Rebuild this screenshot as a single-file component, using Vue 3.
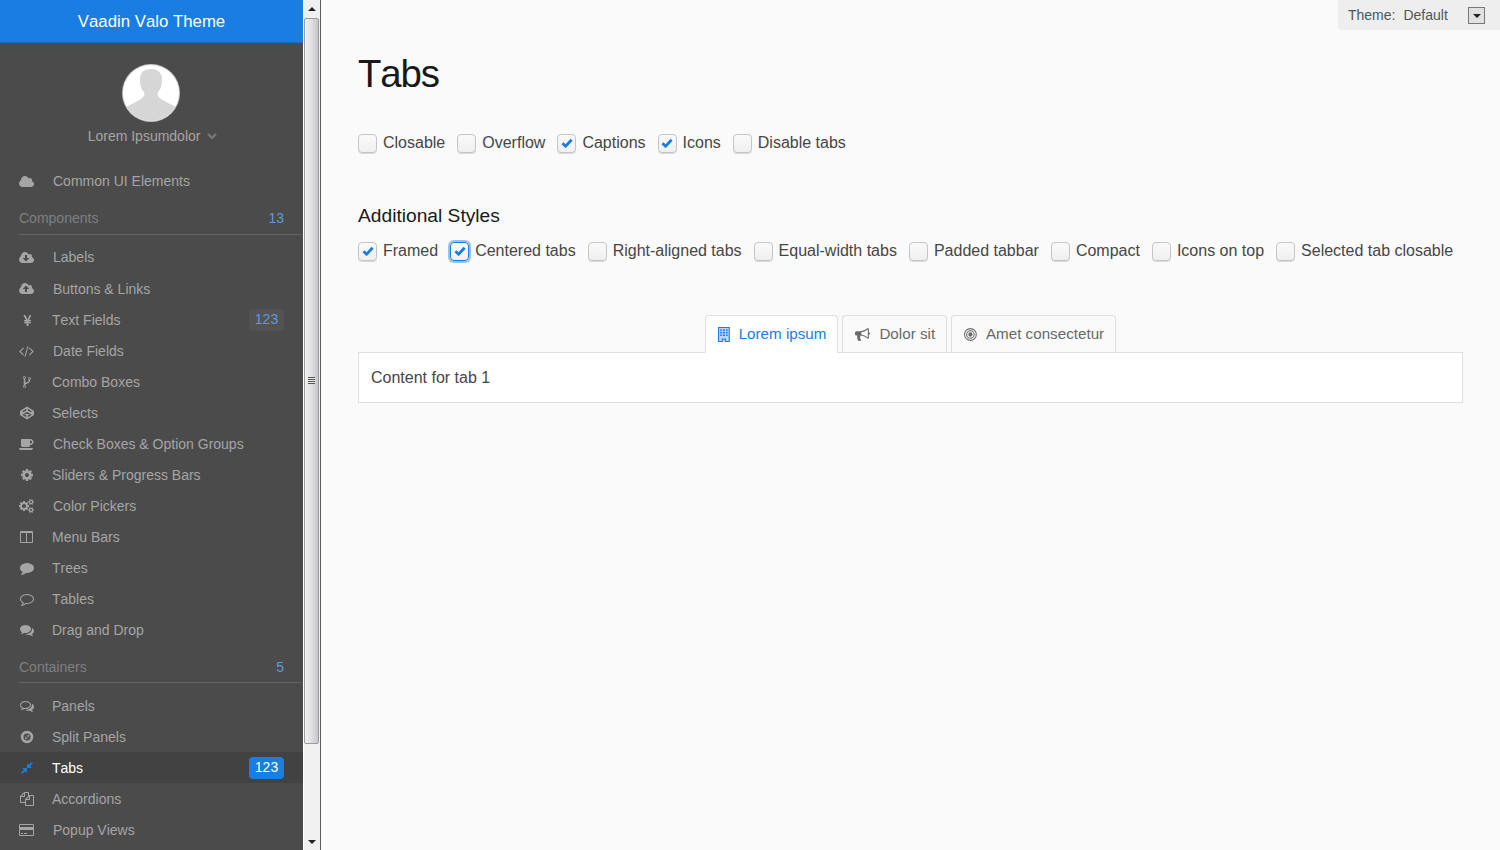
<template>
  <div class="app">
    <!-- sidebar -->
    <aside class="sidebar">
      <div class="brand">Vaadin Valo Theme</div>

      <div class="user">
        <svg class="avatar" viewBox="0 0 58 58">
          <clipPath id="avatar-clip"><circle cx="29" cy="29" r="28" /></clipPath>
          <circle cx="29" cy="29" r="29" fill="#c9c9c9" />
          <circle cx="29" cy="29" r="28" fill="#fff" />
          <path
            clip-path="url(#avatar-clip)"
            fill="#d6d6d6"
            d="M29 5C22 5 18 9 18 15C18 21 19 25 22 28C23 31 22 33 19 35C14 38 8 41 4 43L4 58L54 58L54 43C50 41 44 38 39 35C36 33 35 31 36 28C39 25 40 21 40 15C40 9 36 5 29 5Z"
          />
        </svg>
        <div class="user-name">
          Lorem Ipsumdolor
          <svg class="chevron" viewBox="0 0 10 6"><path d="M1 1L5 5L9 1" /></svg>
        </div>
      </div>

      <nav>
        <template v-for="item in menu" :key="item.label">
          <div v-if="item.section" class="section" :class="{ up: item.up }">
            <span>{{ item.label }}</span>
            <span class="section-count">{{ item.count }}</span>
          </div>
          <div v-else class="row" :class="{ selected: item.selected, up: item.up }">
            <span class="row-icon" :class="{ wide: item.wide }">
              <svg
                :viewBox="icons[item.icon].box"
                :width="(icons[item.icon].w * 14) / 1792"
                height="14"
                :class="icons[item.icon].cls"
              >
                <path :d="icons[item.icon].d" />
              </svg>
            </span>
            <span class="row-label">{{ item.label }}</span>
            <span v-if="item.badge" class="badge">{{ item.badge }}</span>
          </div>
        </template>
      </nav>
    </aside>

    <!-- scrollbar of the sidebar -->
    <div class="scrollbar">
      <div class="arrow"><i class="arrow-up"></i></div>
      <div class="thumb"><b class="grip"></b></div>
      <div class="track"></div>
      <div class="arrow"><i class="arrow-down"></i></div>
    </div>

    <!-- content -->
    <main class="main">
      <div class="theme-picker">
        <span>Theme:</span>
        <span class="theme-value">Default</span>
        <span class="theme-btn"><i class="arrow-down"></i></span>
      </div>

      <h1>Tabs</h1>

      <div class="checks">
        <label v-for="c in options" :key="c.label" class="check">
          <span class="box" :class="{ focused: c.focused }">
            <svg v-if="c.on" viewBox="0 0 12 10"><path d="M1.5 5.2L4.6 8.2L10.6 1.8" /></svg>
          </span>
          {{ c.label }}
        </label>
      </div>

      <h3>Additional Styles</h3>

      <div class="checks">
        <label v-for="c in styles" :key="c.label" class="check">
          <span class="box" :class="{ focused: c.focused }">
            <svg v-if="c.on" viewBox="0 0 12 10"><path d="M1.5 5.2L4.6 8.2L10.6 1.8" /></svg>
          </span>
          {{ c.label }}
        </label>
      </div>

      <div class="tabsheet">
        <div class="tabbar">
          <div v-for="t in tabs" :key="t.label" class="tab" :class="{ active: t.active }">
            <svg :viewBox="icons[t.icon].box" :width="(icons[t.icon].w * 15) / 1792" height="15" :class="icons[t.icon].cls">
              <path :d="icons[t.icon].d" />
            </svg>
            <span class="tab-label">{{ t.label }}</span>
          </div>
        </div>
        <div class="tab-content">Content for tab 1</div>
      </div>
    </main>
  </div>
</template>

<script setup>
const CLOUD_BODY =
  'q0 159-112.5 271.5t-271.5 112.5h-1088q-185 0-316.5-131.5t-131.5-316.5q0-130 70-240t188-165q-2-30-2-43 0-212 150-362t362-150q156 0 285.5 87t188.5 231q71-62 166-62 106 0 181 75t75 181q0 76-41 138 130 31 213.5 135.5t83.5 238.5z'

const icons = {
  cloud: { w: 1920, box: '0 0 1920 1792', d: 'M1920 1152' + CLOUD_BODY },
  cloudDown: {
    w: 1920,
    box: '0 0 1920 1792',
    d: 'M1280 928q0-14-9-23t-23-9h-224v-352q0-13-9.5-22.5t-22.5-9.5h-192q-13 0-22.5 9.5t-9.5 22.5v352h-224q-13 0-22.5 9.5t-9.5 22.5q0 14 9 23l352 352q9 9 23 9t23-9l351-351q10-12 10-24zm640 224' + CLOUD_BODY,
  },
  cloudUp: {
    w: 1920,
    box: '0 0 1920 1792',
    d: 'M1280 864q0-14-9-23l-352-352q-9-9-23-9t-23 9l-351 351q-10 12-10 24 0 14 9 23t23 9h224v352q0 13 9.5 22.5t22.5 9.5h192q13 0 22.5-9.5t9.5-22.5v-352h224q13 0 22.5-9.5t9.5-22.5zm640 288' + CLOUD_BODY,
  },
  yen: {
    w: 1024,
    box: '0 -128 1024 1792',
    d: 'M662 1536h-172q-13 0-22.5-9t-9.5-23v-330h-288q-13 0-22.5-9t-9.5-23v-103q0-13 9.5-22.5t22.5-9.5h288v-85h-288q-13 0-22.5-9t-9.5-23v-104q0-13 9.5-22.5t22.5-9.5h214l-321-578q-8-16 0-32 10-16 28-16h194q19 0 29 18l215 425q19 38 56 125 10-24 30.5-68t27.5-61l191-420q8-19 29-19h191q17 0 27 16 9 14 1 31l-313 579h215q13 0 22.5 9.5t9.5 22.5v104q0 14-9.5 23t-22.5 9h-290v85h290q13 0 22.5 9.5t9.5 22.5v103q0 14-9.5 23t-22.5 9h-290v330q0 13-9.5 22.5t-22.5 9.5z',
  },
  code: {
    w: 1920,
    box: '-60 0 1920 1792',
    d: 'M553 1399l-50 50q-10 10-23 10t-23-10l-466-466q-10-10-10-23t10-23l466-466q10-10 23-10t23 10l50 50q10 10 10 23t-10 23l-393 393 393 393q10 10 10 23t-10 23zm591-1067l-373 1291q-4 13-15.5 19.5t-23.5 2.5l-62-17q-13-4-19.5-15.5t-2.5-24.5l373-1291q4-13 15.5-19.5t23.5-2.5l62 17q13 4 19.5 15.5t2.5 24.5zm657 651l-466 466q-10 10-23 10t-23-10l-50-50q-10-10-10-23t10-23l393-393-393-393q-10-10-10-23t10-23l50-50q10-10 23-10t23 10l466 466q10 10 10 23t-10 23z',
  },
  fork: {
    w: 1024,
    box: '0 -128 1024 1792',
    d: 'M288 1344q0-40-28-68t-68-28-68 28-28 68 28 68 68 28 68-28 28-68zm0-1152q0-40-28-68t-68-28-68 28-28 68 28 68 68 28 68-28 28-68zm640 128q0-40-28-68t-68-28-68 28-28 68 28 68 68 28 68-28 28-68zm96 0q0 52-26 96.5t-70 69.5q-2 287-226 414-67 38-203 81-128 40-169.5 71t-41.5 100v26q44 25 70 69.5t26 96.5q0 80-56 136t-136 56-136-56-56-136q0-52 26-96.5t70-69.5v-820q-44-25-70-69.5t-26-96.5q0-80 56-136t136-56 136 56 56 136q0 52-26 96.5t-70 69.5v497q54-26 154-57 55-17 87.5-29.5t70.5-31 59-39.5 40.5-51 28-69.5 8.5-91.5q-44-25-70-69.5t-26-96.5q0-80 56-136t136-56 136 56 56 136z',
  },
  codepen: {
    w: 1792,
    box: '0 0 1792 1792',
    cls: 'line',
    d: 'M896 170L1690 690V1110L896 1620L100 1110V690ZM896 170V640M896 1152V1620M100 690L896 1152L1690 690M100 1110L896 640L1690 1110',
  },
  coffee: {
    w: 1920,
    box: '0 0 1920 1792',
    d: 'M1664 640q0-80-56-136t-136-56h-64v384h64q80 0 136-56t56-136zm-1664 768h1792q0 106-75 181t-181 75h-1280q-106 0-181-75t-75-181zm1856-768q0 159-112.5 271.5t-271.5 112.5h-64v32q0 92-66 158t-158 66h-704q-92 0-158-66t-66-158v-736q0-26 19-45t45-19h1152q159 0 271.5 112.5t112.5 271.5z',
  },
  cog: {
    w: 1792,
    box: '0 0 1792 1792',
    d: 'M1152 896q0-106-75-181t-181-75-181 75-75 181 75 181 181 75 181-75 75-181zm512-109v222q0 12-8 23t-20 13l-185 28q-19 54-39 91 35 50 107 138 10 12 10 25t-9 23q-27 37-99 108t-94 71q-12 0-26-9l-138-108q-44 23-91 38-16 136-29 186-7 28-36 28h-222q-14 0-24.5-8.5t-11.5-21.5l-28-184q-49-16-90-37l-141 107q-10 9-25 9-14 0-25-11-126-114-165-168-7-10-7-23 0-12 8-23 15-21 51-66.5t54-70.5q-27-50-41-99l-183-27q-13-2-21-12.5t-8-23.5v-222q0-12 8-23t19-13l186-28q14-46 39-92-40-57-107-138-10-12-10-24 0-10 9-23 26-36 98.5-107.5t94.5-71.5q13 0 26 10l138 107q44-23 91-38 16-136 29-186 7-28 36-28h222q14 0 24.5 8.5t11.5 21.5l28 184q49 16 90 37l142-107q9-9 24-9 13 0 25 10 129 119 165 170 7 8 7 22 0 12-8 23-15 21-51 66.5t-54 70.5q26 50 41 98l183 28q13 2 21 12.5t8 23.5z',
  },
  cogs: {
    w: 1920,
    box: '0 0 1920 1792',
    d: 'M896 896q0-106-75-181t-181-75-181 75-75 181 75 181 181 75 181-75 75-181zm768 512q0-52-38-90t-90-38-90 38-38 90q0 53 37.5 90.5t90.5 37.5 90.5-37.5 37.5-90.5zm0-1024q0-52-38-90t-90-38-90 38-38 90q0 53 37.5 90.5t90.5 37.5 90.5-37.5 37.5-90.5zm-384 421v185q0 10-7 19.5t-16 10.5l-155 24q-11 35-32 76 34 48 90 115 7 11 7 20 0 12-7 19-23 30-82.5 89.5t-78.5 59.5q-11 0-21-7l-115-90q-37 19-77 31-11 108-23 155-7 24-30 24h-186q-11 0-20-7.5t-10-17.5l-23-153q-34-10-75-31l-118 89q-7 7-20 7-11 0-21-8-144-133-144-160 0-9 7-19 10-14 41-53t47-61q-23-44-35-82l-152-24q-10-1-17-9.5t-7-19.5v-185q0-10 7-19.5t16-10.5l155-24q11-35 32-76-34-48-90-115-7-11-7-20 0-12 7-20 22-30 82-89t79-59q11 0 21 7l115 90q34-18 77-32 11-108 23-154 7-24 30-24h186q11 0 20 7.5t10 17.5l23 153q34 10 75 31l118-89q8-7 20-7 11 0 21 8 144 133 144 160 0 8-7 19-12 16-42 54t-45 60q23 48 34 82l152 23q10 2 17 10.5t7 19.5zm640 533v140q0 16-149 31-12 27-30 52 51 113 51 138 0 4-4 7-122 71-124 71-8 0-46-47t-52-68q-20 2-30 2t-30-2q-14 21-52 68t-46 47q-2 0-124-71-4-3-4-7 0-25 51-138-18-25-30-52-149-15-149-31v-140q0-16 149-31 13-29 30-52-51-113-51-138 0-4 4-7 4-2 35-20t59-34 30-16q8 0 46 46.5t52 67.5q20-2 30-2t30 2q51-71 92-112l6-2q4 0 124 70 4 3 4 7 0 25-51 138 17 23 30 52 149 15 149 31zm0-1024v140q0 16-149 31-12 27-30 52 51 113 51 138 0 4-4 7-122 71-124 71-8 0-46-47t-52-68q-20 2-30 2t-30-2q-14 21-52 68t-46 47q-2 0-124-71-4-3-4-7 0-25 51-138-18-25-30-52-149-15-149-31v-140q0-16 149-31 13-29 30-52-51-113-51-138 0-4 4-7 4-2 35-20t59-34 30-16q8 0 46 46.5t52 67.5q20-2 30-2t30 2q51-71 92-112l6-2q4 0 124 70 4 3 4 7 0 25-51 138 17 23 30 52 149 15 149 31z',
  },
  columns: {
    w: 1664,
    box: '0 -128 1664 1792',
    d: 'M160 1408h608v-1152h-640v1120q0 13 9.5 22.5t22.5 9.5zm1376-32v-1120h-640v1152h608q13 0 22.5-9.5t9.5-22.5zm128-1216v1216q0 66-47 113t-113 47h-1344q-66 0-113-47t-47-113v-1216q0-66 47-113t113-47h1344q66 0 113 47t47 113z',
  },
  comment: {
    w: 1792,
    box: '0 0 1792 1792',
    d: 'M1792 896q0 174-120 321.5t-326 233-450 85.5q-70 0-145-8-198 175-460 242-49 14-114 22-17 2-30.5-9t-17.5-29v-1q-3-4-.5-12t2-10 4.5-9.5l6-9 7-8.5 8-9q7-8 31-34.5t34.5-38 31-39.5 32.5-51 27-59 26-76q-157-89-247.5-220t-90.5-281q0-130 71-248.5t191-204.5 286-136.5 348-50.5q244 0 450 85.5t326 233 120 321.5z',
  },
  commentO: {
    w: 1792,
    box: '0 0 1792 1792',
    d: 'M896 384q-204 0-381.5 69.5t-282 187.5-104.5 255q0 112 71.5 213.5t201.5 175.5l87 50-27 96q-24 91-70 172 152-63 275-171l43-38 57 6q69 8 130 8 204 0 381.5-69.5t282-187.5 104.5-255-104.5-255-282-187.5-381.5-69.5zm896 512q0 174-120 321.5t-326 233-450 85.5q-70 0-145-8-198 175-460 242-49 14-114 22h-5q-15 0-27-10.5t-16-27.5v-1q-3-4-.5-12t2-10 4.5-9.5l6-9 7-8.5 8-9q7-8 31-34.5t34.5-38 31-39.5 32.5-51 27-59 26-76q-157-89-247.5-220t-90.5-281q0-174 120-321.5t326-233 450-85.5 450 85.5 326 233 120 321.5z',
  },
  comments: {
    w: 1792,
    box: '0 0 1792 1792',
    d: 'M1408 768q0 139-94 257t-256.5 186.5-353.5 68.5q-86 0-176-16-124 88-278 128-36 9-86 16h-3q-11 0-20.5-8t-11.5-21q-1-3-1-6.5t.5-6.5 2-6l2.5-5 3.5-5.5 4-5 4.5-5 4-4.5q5-6 23-25t26-29.5 22.5-29 25-38.5 20.5-44q-124-72-195-177t-71-224q0-139 94-257t256.5-186.5 353.5-68.5 353.5 68.5 256.5 186.5 94 257zm384 256q0 120-71 224.5t-195 176.5q10 24 20.5 44t25 38.5 22.5 29 26 29.5 23 25q1 1 4 4.5t4.5 5 4 5 3.5 5.5l2.5 5 2 6 .5 6.5-1 6.5q-3 14-13 22t-22 7q-50-7-86-16-154-40-278-128-90 16-176 16-271 0-472-132 58 4 88 4 161 0 309-45t264-129q125-92 192-212t67-254q0-77-23-152 129 71 204 178t75 230z',
  },
  commentsO: {
    w: 1792,
    box: '0 0 1792 1792',
    d: 'M704 384q-153 0-286 52t-211.5 141-78.5 191q0 82 53 158t149 132l97 56-35 84q34-20 62-39l44-31 53 10q78 14 153 14 153 0 286-52t211.5-141 78.5-191-78.5-191-211.5-141-286-52zm0-128q191 0 353.5 68.5t256.5 186.5 94 257-94 257-256.5 186.5-353.5 68.5q-86 0-176-16-124 88-278 128-36 9-86 16h-3q-11 0-20.5-8t-11.5-21q-1-3-1-6.5t.5-6.5 2-6l2.5-5 3.5-5.5 4-5 4.5-5 4-4.5q5-6 23-25t26-29.5 22.5-29 25-38.5 20.5-44q-124-72-195-177t-71-224q0-139 94-257t256.5-186.5 353.5-68.5zm824 1142q10 24 20.5 44t25 38.5 22.5 29 26 29.5 23 25q1 1 4 4.5t4.5 5 4 5 3.5 5.5l2.5 5 2 6 .5 6.5-1 6.5q-3 14-13 22t-22 7q-50-7-86-16-154-40-278-128-90 16-176 16-271 0-472-132 58 4 88 4 161 0 309-45t264-129q125-92 192-212t67-254q0-77-23-152 129 71 204 178t75 230q0 120-71 224.5t-195 176.5z',
  },
  compass: {
    w: 1792,
    box: '0 0 1792 1792',
    d: 'M896 100A796 796 0 1 0 896 1692A796 796 0 1 0 896 100ZM896 440A456 456 0 1 1 896 1352A456 456 0 1 1 896 440ZM1200 592L1030 1030L592 1200L762 762ZM896 780A116 116 0 1 0 896 1012A116 116 0 1 0 896 780Z',
  },
  compress: {
    w: 1792,
    box: '0 0 1792 1792',
    d: 'M896 960v448q0 26-19 45t-45 19-45-19l-144-144-332 332q-10 10-23 10t-23-10l-114-114q-10-10-10-23t10-23l332-332-144-144q-19-19-19-45t19-45 45-19h448q26 0 45 19t19 45zm755-672q0 13-10 23l-332 332 144 144q19 19 19 45t-19 45-45 19h-448q-26 0-45-19t-19-45v-448q0-26 19-45t45-19 45 19l144 144 332-332q10-10 23-10t23 10l114 114q10 10 10 23z',
  },
  files: {
    w: 1792,
    box: '0 0 1792 1792',
    d: 'M1696 384q40 0 68 28t28 68v1216q0 40-28 68t-68 28h-960q-40 0-68-28t-28-68v-288h-544q-40 0-68-28t-28-68v-672q0-40 20-88t48-76l408-408q28-28 76-48t88-20h416q40 0 68 28t28 68v328q68-40 128-40h416zm-544 213l-299 299h299v-299zm-640-384l-299 299h299v-299zm196 647l316-316v-416h-384v416q0 40-28 68t-68 28h-416v640h512v-256q0-40 20-88t48-76zm956 804v-1152h-384v416q0 40-28 68t-68 28h-416v640h896z',
  },
  card: {
    w: 1920,
    box: '0 0 1920 1792',
    d: 'M1760 128q66 0 113 47t47 113v1216q0 66-47 113t-113 47h-1600q-66 0-113-47t-47-113v-1216q0-66 47-113t113-47h1600zm-1600 128q-13 0-22.5 9.5t-9.5 22.5v224h1664v-224q0-13-9.5-22.5t-22.5-9.5h-1600zm1600 1280q13 0 22.5-9.5t9.5-22.5v-608h-1664v608q0 13 9.5 22.5t22.5 9.5h1600zm-1504-128v-128h256v128h-256zm384 0v-128h384v128h-384z',
  },
  building: {
    w: 1408,
    box: '0 0 1408 1792',
    d: 'M64 0H1344Q1408 0 1408 64V1728Q1408 1792 1344 1792H832V1504H576V1792H64Q0 1792 0 1728V64Q0 0 64 0ZM128 128V1664H448V1376H960V1664H1280V128ZM256 256H448V448H256ZM576 256H832V448H576ZM960 256H1152V448H960ZM256 576H448V768H256ZM576 576H832V768H576ZM960 576H1152V768H960ZM256 896H448V1088H256ZM576 896H832V1088H576ZM960 896H1152V1088H960Z',
  },
  bullhorn: {
    w: 1792,
    box: '0 0 1792 1792',
    d: 'M1664 640q53 0 90.5 37.5t37.5 90.5-37.5 90.5-90.5 37.5v384q0 52-38 90t-90 38q-417-347-812-380-58 19-91 66t-31 100.5 40 92.5q-20 33-23 65.5t6 58 33.5 55 48 50 61.5 50.5q-29 58-111.5 83t-168.5 11.5-132-55.5q-7-23-29.5-87.5t-32-94.5-23-89-15-101 3.5-98.5 22-110.5h-122q-66 0-113-47t-47-113v-192q0-66 47-113t113-47h480q435 0 896-384 52 0 90 38t38 90v384zm-128 604v-954q-394 302-768 343v270q377 42 768 341z',
  },
  bullseye: {
    w: 1536,
    box: '0 0 1536 1792',
    d: 'M768 128A768 768 0 1 0 768 1664A768 768 0 1 0 768 128ZM768 256A640 640 0 1 1 768 1536A640 640 0 1 1 768 256ZM768 384A512 512 0 1 0 768 1408A512 512 0 1 0 768 384ZM768 512A384 384 0 1 1 768 1280A384 384 0 1 1 768 512ZM768 640A256 256 0 1 0 768 1152A256 256 0 1 0 768 640Z',
  },
}

const menu = [
  { label: 'Common UI Elements', icon: 'cloud', wide: true, up: true },
  { label: 'Components', section: true, count: 13, up: true },
  { label: 'Labels', icon: 'cloudDown', wide: true, up: true },
  { label: 'Buttons & Links', icon: 'cloudUp', wide: true },
  { label: 'Text Fields', icon: 'yen', badge: 123 },
  { label: 'Date Fields', icon: 'code', wide: true },
  { label: 'Combo Boxes', icon: 'fork' },
  { label: 'Selects', icon: 'codepen' },
  { label: 'Check Boxes & Option Groups', icon: 'coffee', wide: true },
  { label: 'Sliders & Progress Bars', icon: 'cog' },
  { label: 'Color Pickers', icon: 'cogs', wide: true },
  { label: 'Menu Bars', icon: 'columns' },
  { label: 'Trees', icon: 'comment' },
  { label: 'Tables', icon: 'commentO' },
  { label: 'Drag and Drop', icon: 'comments' },
  { label: 'Containers', section: true, count: 5 },
  { label: 'Panels', icon: 'commentsO' },
  { label: 'Split Panels', icon: 'compass' },
  { label: 'Tabs', icon: 'compress', selected: true, badge: 123 },
  { label: 'Accordions', icon: 'files' },
  { label: 'Popup Views', icon: 'card', wide: true },
]

const options = [
  { label: 'Closable' },
  { label: 'Overflow' },
  { label: 'Captions', on: true },
  { label: 'Icons', on: true },
  { label: 'Disable tabs' },
]

const styles = [
  { label: 'Framed', on: true },
  { label: 'Centered tabs', on: true, focused: true },
  { label: 'Right-aligned tabs' },
  { label: 'Equal-width tabs' },
  { label: 'Padded tabbar' },
  { label: 'Compact' },
  { label: 'Icons on top' },
  { label: 'Selected tab closable' },
]

const tabs = [
  { label: 'Lorem ipsum', icon: 'building', active: true },
  { label: 'Dolor sit', icon: 'bullhorn' },
  { label: 'Amet consectetur', icon: 'bullseye' },
]
</script>

<style>
html,
body {
  margin: 0;
  overflow: hidden;
}
</style>

<style scoped>
.app {
  display: flex;
  height: 850px;
  overflow: hidden;
  font-family: 'Liberation Sans', Arial, sans-serif;
  font-kerning: none;
  color: #464646;
  background: #fafafa;
}

/* sidebar */
.sidebar {
  width: 303px;
  flex: none;
  background: #4b4b4b;
  color: #a5a5a5;
  font-size: 14px;
}

.brand {
  height: 43px;
  line-height: 43px;
  text-align: center;
  color: #fff;
  font-size: 16.8px;
  background: #197de1;
  box-shadow: inset 0 -1px 0 #1a6fc4;
}

.user {
  height: 123px;
  padding-top: 21px;
  box-sizing: border-box;
  text-align: center;
}

.avatar {
  display: block;
  width: 58px;
  height: 58px;
  margin: 0 auto;
  position: relative;
  left: -1px;
}

.user-name {
  margin-top: 5px;
  padding-left: 2px;
  line-height: 18px;
  color: #a5a5a5;
}

.chevron {
  width: 10px;
  height: 6px;
  margin-left: 3px;
  vertical-align: 2px;
  fill: none;
  stroke: #767676;
  stroke-width: 2.4;
}

.section {
  height: 38px;
  box-sizing: border-box;
  margin: 0 0 7px 19px;
  padding: 14px 19px 0 0;
  line-height: 16px;
  display: flex;
  justify-content: space-between;
  color: #7f7f7f;
  border-bottom: 1px solid #656565;
}

.section.up {
  padding-top: 13px;
}

.section-count {
  color: #5c9ade;
}

.row {
  height: 31px;
  display: flex;
  align-items: center;
  padding: 0 19px;
}

.row.selected {
  background: #424242;
  color: #fff;
}

.row-icon {
  width: 15px;
  margin-right: 18px;
  display: flex;
  justify-content: center;
  flex: none;
}

.row-icon.wide {
  margin-right: 19px;
}

.row-icon svg {
  flex: none;
  fill: #a5a5a5;
}

.row-icon svg.line {
  fill: none;
  stroke: #a5a5a5;
  stroke-width: 190;
  stroke-linejoin: round;
}

.selected .row-icon svg {
  fill: #197de1;
}

.row-label {
  flex: 1;
}

.up .row-label {
  margin-top: -1px;
}

.badge {
  width: 35px;
  height: 22px;
  line-height: 21px;
  text-align: center;
  border-radius: 4px;
  background: #535353;
  color: #5c9ade;
}

.selected .badge {
  background: #197de1;
  color: #fff;
}

/* scrollbar */
.scrollbar {
  width: 18px;
  flex: none;
  box-sizing: border-box;
  display: flex;
  flex-direction: column;
  background: #f0f0f0;
  border-left: 1px solid #fff;
  border-right: 1px solid #5a5a5a;
}

.arrow {
  height: 17px;
  flex: none;
  display: flex;
  align-items: center;
  justify-content: center;
}

.arrow-up,
.arrow-down {
  display: block;
  width: 0;
  height: 0;
  border-left: 4px solid transparent;
  border-right: 4px solid transparent;
}

.arrow-up {
  border-bottom: 4px solid #222;
}

.arrow-down {
  border-top: 4px solid #222;
}

.thumb {
  width: 15px;
  height: 726px;
  margin-top: 1px;
  flex: none;
  box-sizing: border-box;
  display: flex;
  align-items: center;
  justify-content: center;
  border: 1px solid #9a9a9a;
  border-radius: 2px;
  background: linear-gradient(90deg, #f1f1f1, #e2e2e4 45%, #c7c7ca);
}

.grip {
  display: block;
  width: 7px;
  height: 7px;
  margin-top: -1px;
  background: repeating-linear-gradient(#555 0 1px, #e8e8e8 1px 2px);
}

.track {
  flex: 1;
}

/* content */
.main {
  flex: 1;
  min-width: 0;
  padding: 0 37px;
  position: relative;
}

.theme-picker {
  position: absolute;
  top: 0;
  right: 0;
  width: 162px;
  height: 30px;
  box-sizing: border-box;
  padding-left: 10px;
  display: flex;
  align-items: center;
  font-size: 14px;
  color: #555;
  background: #eee;
  border-bottom-left-radius: 4px;
}

.theme-value {
  margin-left: 8px;
}

.theme-btn {
  position: absolute;
  left: 130px;
  top: 7px;
  width: 17px;
  height: 17px;
  box-sizing: border-box;
  display: flex;
  align-items: center;
  justify-content: center;
  border: 1px solid #777;
  background: #e1e1e1;
}

h1 {
  margin: 0;
  padding-top: 51px;
  font-size: 38.4px;
  line-height: 46px;
  font-weight: 400;
  letter-spacing: -0.03em;
  color: #191919;
}

h3 {
  margin: 51px 0 0;
  font-size: 19.2px;
  line-height: 24px;
  font-weight: 400;
  color: #191919;
}

.checks {
  margin-top: 13px;
  display: flex;
  gap: 12px;
  font-size: 16px;
  line-height: 20px;
}

h1 + .checks {
  margin-top: 36px;
}

.check {
  display: flex;
  align-items: center;
  gap: 6px;
  white-space: nowrap;
}

.box {
  width: 19px;
  height: 19px;
  box-sizing: border-box;
  display: flex;
  align-items: center;
  justify-content: center;
  border: 1px solid #c5c5c5;
  border-radius: 4px;
  background: linear-gradient(#fafafa, #efefef);
  box-shadow: 0 1px 0 #d8d8d8;
}

.box.focused {
  border-color: #197de1;
  box-shadow: 0 0 0 2px rgba(25, 125, 225, 0.45);
}

.box svg {
  width: 12px;
  height: 10px;
  fill: none;
  stroke: #197de1;
  stroke-width: 2.8;
}

.tabsheet {
  margin-top: 54px;
}

.tabbar {
  display: flex;
  justify-content: center;
  gap: 4px;
  border-bottom: 1px solid #dfdfdf;
}

.tab {
  height: 37px;
  box-sizing: border-box;
  padding: 0 11px 0 12px;
  display: flex;
  align-items: center;
  gap: 9px;
  font-size: 15.2px;
  color: #696969;
  background: #fafafa;
  border: 1px solid #dfdfdf;
  border-bottom: 0;
  border-radius: 4px 4px 0 0;
}

.tab-label {
  margin-top: -2px;
}

.tab svg {
  fill: #6b6b6b;
}

.tab.active {
  height: 38px;
  margin-bottom: -1px;
  color: #197de1;
  background: #fff;
}

.tab.active svg {
  fill: #197de1;
  background: rgba(25, 125, 225, 0.3);
}

.tab-content {
  height: 49px;
  padding: 0 12px;
  line-height: 50px;
  font-size: 16px;
  background: #fff;
  border: 1px solid #dfdfdf;
  border-top: 0;
}
</style>
